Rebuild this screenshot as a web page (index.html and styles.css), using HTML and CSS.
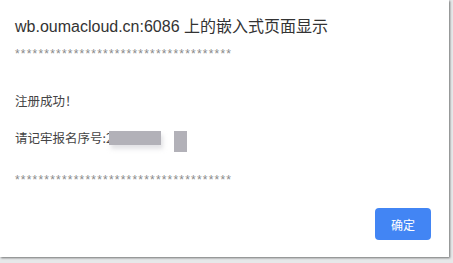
FILE: index.html
```html
<!DOCTYPE html>
<html lang="zh-CN">
<head>
<meta charset="utf-8">
<title>dialog</title>
<link rel="stylesheet" href="styles.css">
</head>
<body>
<div class="dialog">
  <div class="title">wb.oumacloud.cn:6086 上的嵌入式页面显示</div>
  <div class="message">
    <div class="stars stars-top">*************************************</div>
    <div class="line success">注册成功！</div>
    <div class="line serial">请记牢报名序号:2<span class="redact redact-a"></span><span class="redact redact-b"></span></div>
    <div class="stars stars-bottom">*************************************</div>
  </div>
  <div class="actions">
    <button class="ok">确定</button>
  </div>
</div>
</body>
</html>
```
FILE: styles.css
```css
html, body {
  margin: 0;
  padding: 0;
}
body {
  width: 453px;
  height: 263px;
  background: #e6e8e9;
  overflow: hidden;
  font-family: "Liberation Sans", "Noto Sans CJK SC", sans-serif;
}
.dialog {
  width: 449px;
  height: 257px;
  background: #ffffff;
  box-shadow: 1px 1px 2px rgba(0, 0, 0, 0.5);
  display: flex;
  flex-direction: column;
  box-sizing: border-box;
  padding: 17px 18px 0 15px;
}
.title {
  font-size: 16px;
  line-height: 20px;
  height: 20px;
  color: #333333;
  white-space: nowrap;
}
.message {
  display: flex;
  flex-direction: column;
}
.stars {
  font-size: 12px;
  letter-spacing: 1.2px;
  line-height: 16px;
  height: 16px;
  color: #8a8a8a;
  white-space: nowrap;
}
.stars-top {
  margin-top: 9px;
}
.line {
  font-family: "Noto Sans CJK SC", sans-serif;
  font-size: 12.5px;
  line-height: 16px;
  height: 16px;
  color: #444444;
  white-space: nowrap;
}
.success {
  margin-top: 31px;
}
.serial {
  margin-top: 21px;
}
.redact {
  display: inline-block;
  background: #b2b1b8;
  vertical-align: top;
}
.redact-a {
  width: 52px;
  height: 14px;
  margin-left: -4px;
  margin-top: 1px;
  box-shadow: 2px 4px 4px rgba(200, 200, 205, 0.5);
}
.redact-b {
  width: 13px;
  height: 21px;
  margin-left: 13px;
  margin-top: 1px;
  filter: blur(0.5px);
}
.stars-bottom {
  margin-top: 26px;
}
.actions {
  display: flex;
  justify-content: flex-end;
  margin-top: 20px;
}
.ok {
  width: 56px;
  height: 32px;
  border: none;
  border-radius: 4px;
  background: #4285f4;
  color: #ffffff;
  font-family: "Noto Sans CJK SC", sans-serif;
  font-size: 12px;
  padding: 0;
}
```
